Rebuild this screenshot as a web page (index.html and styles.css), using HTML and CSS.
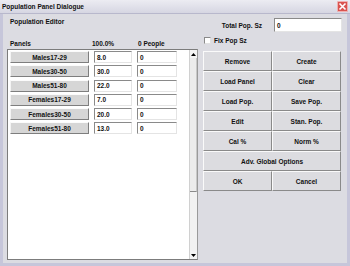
FILE: index.html
```html
<!DOCTYPE html>
<html>
<head>
<meta charset="utf-8">
<link rel="stylesheet" href="styles.css">
</head>
<body>
<div class="window">
  <div class="titlebar">
    <span class="title">Population Panel Dialogue</span>
    <span class="close"><svg width="9" height="9" viewBox="0 0 9 9"><path d="M1.5 1.5 L7.5 7.5 M7.5 1.5 L1.5 7.5" stroke="#fff" stroke-width="1.6"/></svg></span>
  </div>
  <div class="body">
    <div class="left">
      <div class="editor-label">Population Editor</div>
      <div class="headers"><span>Panels</span><span>100.0%</span><span>0 People</span></div>
      <div class="list">
        <div class="rows">
          <div class="row"><div class="pbtn">Males17-29</div><div class="field">8.0</div><div class="field">0</div></div>
          <div class="row"><div class="pbtn">Males30-50</div><div class="field">30.0</div><div class="field">0</div></div>
          <div class="row"><div class="pbtn">Males51-80</div><div class="field">22.0</div><div class="field">0</div></div>
          <div class="row"><div class="pbtn">Females17-29</div><div class="field">7.0</div><div class="field">0</div></div>
          <div class="row"><div class="pbtn">Females30-50</div><div class="field">20.0</div><div class="field">0</div></div>
          <div class="row"><div class="pbtn">Females51-80</div><div class="field">13.0</div><div class="field">0</div></div>
        </div>
        <div class="scrollbar">
          <div class="arrow"><svg width="5" height="3" viewBox="0 0 5 3"><path d="M0 3 L2.5 0 L5 3Z" fill="#000"/></svg></div>
          <div class="thumb"></div>
          <div class="track"></div>
          <div class="arrow"><svg width="5" height="3" viewBox="0 0 5 3"><path d="M0 0 L2.5 3 L5 0Z" fill="#000"/></svg></div>
        </div>
      </div>
    </div>
    <div class="right">
      <div class="total-row"><span>Total Pop. Sz</span><div class="field total">0</div></div>
      <div class="fix-row"><span class="check"></span><span>Fix Pop Sz</span></div>
      <div class="grid">
        <div class="btn">Remove</div>
        <div class="btn">Create</div>
        <div class="btn">Load Panel</div>
        <div class="btn">Clear</div>
        <div class="btn">Load Pop.</div>
        <div class="btn">Save Pop.</div>
        <div class="btn">Edit</div>
        <div class="btn">Stan. Pop.</div>
        <div class="btn">Cal %</div>
        <div class="btn">Norm %</div>
        <div class="btn wide">Adv. Global Options</div>
        <div class="btn">OK</div>
        <div class="btn">Cancel</div>
      </div>
    </div>
  </div>
</div>
</body>
</html>
```
FILE: styles.css
```css
* { box-sizing: border-box; }
html, body { margin: 0; padding: 0; }
body {
  width: 350px;
  height: 266px;
  overflow: hidden;
  font-family: "Liberation Sans", Arial, sans-serif;
  font-weight: bold;
  font-size: 6.5px;
  color: #111;
  background: #dcdce2;
}
.window {
  width: 350px;
  height: 266px;
  display: flex;
  flex-direction: column;
  background: #dcdce2;
  border-left: 3px solid #c6c6da;
  border-right: 3px solid #c6c6da;
  border-bottom: 3px solid #c6c6da;
}
.titlebar {
  height: 14px;
  margin: 0 -3px;
  display: flex;
  align-items: center;
  justify-content: space-between;
  padding: 0 2px 0 2px;
  background: linear-gradient(#ececf2, #d6d6e2);
  border-bottom: 1px solid #b8b8cc;
}
.title { font-size: 6.5px; line-height: 10px; }
.close {
  width: 11px;
  height: 11px;
  display: flex;
  align-items: center;
  justify-content: center;
  background: #d9534f;
  border: 1px solid #f0b0b0;
  border-radius: 1px;
}
.body {
  flex: 1;
  display: flex;
  gap: 5px;
  padding: 0 6px 3px 4px;
}
.left {
  width: 191px;
  display: flex;
  flex-direction: column;
}
.editor-label {
  height: 10px;
  line-height: 10px;
  margin-top: 3px;
  padding-left: 3px;
}
.headers {
  display: grid;
  grid-template-columns: 82px 46px auto;
  height: 9px;
  line-height: 9px;
  margin-top: 12px;
  margin-bottom: 1px;
  padding-left: 3px;
}
.list {
  flex: 1;
  display: flex;
  background: #fff;
  border: 1px solid #7c7c7c;
  border-right-color: #9a9a9a;
}
.rows {
  flex: 1;
  display: flex;
  flex-direction: column;
  gap: 2.3px;
  padding: 1px 0 0 2px;
}
.row {
  display: grid;
  grid-template-columns: 79px 38px 40px;
  column-gap: 5px;
  height: 12px;
}
.pbtn {
  background: #d6d6d6;
  border: 1px solid;
  border-color: #fbfbfb #7e7e7e #7e7e7e #f4f4f4;
  display: flex;
  align-items: center;
  justify-content: center;
}
.field {
  background: #fff;
  border: 1px solid;
  border-color: #8a8a8a #e4e4e4 #e4e4e4 #8a8a8a;
  font-weight: normal;
  font-family: "Liberation Sans", Arial, sans-serif;
  font-weight: bold;
  padding-left: 2px;
  display: flex;
  align-items: center;
}
.scrollbar {
  width: 8px;
  display: flex;
  flex-direction: column;
  background: #efefef;
  border-left: 1px solid #d0d0d0;
}
.arrow {
  height: 8px;
  display: flex;
  align-items: center;
  justify-content: center;
  background: #f4f4f4;
}
.thumb {
  height: 134px;
  background: #ececec;
  border-bottom: 1px solid #8a8a8a;
  border-right: 1px solid #c8c8c8;
}
.track { flex: 1; background: #f2f2f2; }
.right {
  width: 138px;
  display: flex;
  flex-direction: column;
}
.total-row {
  display: flex;
  align-items: center;
  justify-content: flex-end;
  gap: 12px;
  height: 14px;
  margin-top: 4px;
  margin-right: -1px;
}
.total { width: 68px; height: 14px; }
.fix-row {
  display: flex;
  align-items: center;
  gap: 3px;
  height: 10px;
  margin-top: 3px;
  padding-left: 1px;
}
.check {
  width: 7px;
  height: 7px;
  background: #fff;
  border: 1px solid;
  border-color: #8a8a8a #e0e0e0 #e0e0e0 #8a8a8a;
}
.grid {
  margin-top: 6px;
  display: grid;
  grid-template-columns: 69px 69px;
  grid-auto-rows: 20px;
}
.btn {
  display: flex;
  align-items: center;
  justify-content: center;
  background: #dcdce0;
  border: 1px solid;
  border-color: #fafafa #8a8a8a #8a8a8a #fafafa;
}
.wide { grid-column: span 2; }
```
